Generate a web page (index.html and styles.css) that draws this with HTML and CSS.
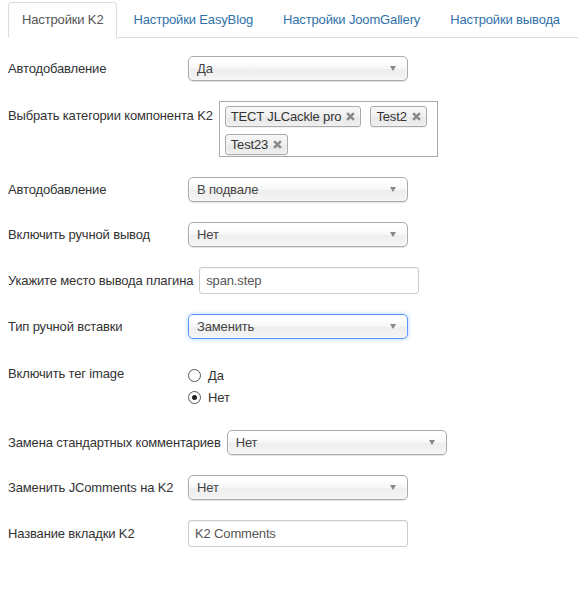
FILE: index.html
```html
<!DOCTYPE html>
<html lang="ru">
<head>
<meta charset="utf-8">
<title>Настройки</title>
<link rel="stylesheet" href="styles.css">
</head>
<body>
<div class="page">
  <ul class="tabs">
    <li class="tab active">Настройки K2</li>
    <li class="tab">Настройки EasyBlog</li>
    <li class="tab">Настройки JoomGallery</li>
    <li class="tab">Настройки вывода</li>
  </ul>

  <div class="form">
    <div class="row">
      <div class="label">Автодобавление</div>
      <div class="select"><span>Да</span><i class="arrow"></i></div>
    </div>

    <div class="row top">
      <div class="label">Выбрать категории компонента K2</div>
      <div class="multi">
        <span class="tag">TECT JLCackle pro<svg class="x" viewBox="0 0 8 8"><path d="M1 1L7 7M7 1L1 7"/></svg></span>
        <span class="tag">Test2<svg class="x" viewBox="0 0 8 8"><path d="M1 1L7 7M7 1L1 7"/></svg></span>
        <span class="tag">Test23<svg class="x" viewBox="0 0 8 8"><path d="M1 1L7 7M7 1L1 7"/></svg></span>
      </div>
    </div>

    <div class="row">
      <div class="label">Автодобавление</div>
      <div class="select"><span>В подвале</span><i class="arrow"></i></div>
    </div>

    <div class="row">
      <div class="label">Включить ручной вывод</div>
      <div class="select"><span>Нет</span><i class="arrow"></i></div>
    </div>

    <div class="row">
      <div class="label">Укажите место вывода плагина</div>
      <div class="input">span.step</div>
    </div>

    <div class="row">
      <div class="label">Тип ручной вставки</div>
      <div class="select focus"><span>Заменить</span><i class="arrow"></i></div>
    </div>

    <div class="row top">
      <div class="label">Включить тег image</div>
      <div class="radios">
        <div class="radio"><span class="dot"></span>Да</div>
        <div class="radio"><span class="dot checked"></span>Нет</div>
      </div>
    </div>

    <div class="row">
      <div class="label">Замена стандартных комментариев</div>
      <div class="select"><span>Нет</span><i class="arrow"></i></div>
    </div>

    <div class="row">
      <div class="label">Заменить JComments на K2</div>
      <div class="select"><span>Нет</span><i class="arrow"></i></div>
    </div>

    <div class="row">
      <div class="label">Название вкладки K2</div>
      <div class="input">K2 Comments</div>
    </div>
  </div>
</div>
</body>
</html>
```

FILE: styles.css
```css
html, body {
  margin: 0;
  padding: 0;
  background: #fff;
}
body {
  font-family: "Liberation Sans", Arial, sans-serif;
  font-size: 13px;
  letter-spacing: -0.15px;
  color: #333;
}
.page {
  padding: 2px 0 0 8px;
}
.tabs {
  list-style: none;
  margin: 0;
  padding: 0;
  display: flex;
  border-bottom: 1px solid #ddd;
}
.tab {
  padding: 7px 13px;
  line-height: 20px;
  border: 1px solid transparent;
  border-radius: 4px 4px 0 0;
  margin-right: 2px;
  margin-bottom: -1px;
  color: #3071a9;
  white-space: nowrap;
}
.tab.active {
  color: #555;
  background: #fff;
  border-color: #ddd;
  border-bottom-color: #fff;
}
.form {
  padding-top: 18px;
}
.row {
  display: flex;
  align-items: center;
  margin-bottom: 20px;
}
.row.top {
  align-items: flex-start;
}
.label {
  flex: 0 0 auto;
  min-width: 174px;
  margin-right: 6px;
  line-height: 18px;
  white-space: nowrap;
}
.row.top .label {
  padding-top: 6px;
}
.select {
  box-sizing: border-box;
  width: 220px;
  height: 25px;
  border: 1px solid #aaa;
  border-radius: 5px;
  background: linear-gradient(#ffffff 20%, #f6f6f6 50%, #eeeeee 52%, #f4f4f4 100%);
  box-shadow: 0 0 3px #fff inset, 0 1px 1px rgba(0,0,0,0.12);
  display: flex;
  align-items: center;
  justify-content: space-between;
  padding: 0 11px 0 8px;
  color: #444;
  line-height: 23px;
}
.select.focus {
  border-color: #5897fb;
  box-shadow: 0 0 4px rgba(88,151,251,0.5);
}
.arrow {
  width: 0;
  height: 0;
  border-left: 3px solid transparent;
  border-right: 3px solid transparent;
  border-top: 5px solid #888;
}
.input {
  box-sizing: border-box;
  width: 220px;
  height: 27px;
  border: 1px solid #ccc;
  border-radius: 3px;
  box-shadow: inset 0 1px 1px rgba(0,0,0,0.05);
  padding: 0 6px;
  line-height: 25px;
  color: #555;
}
.multi {
  box-sizing: border-box;
  width: 219px;
  height: 56px;
  border: 1px solid #aaa;
  background: #fff;
  display: flex;
  flex-wrap: wrap;
  align-content: flex-start;
  column-gap: 9px;
  row-gap: 7px;
  padding: 4px 0 0 5px;
}
.tag {
  box-sizing: border-box;
  height: 21px;
  display: flex;
  align-items: center;
  gap: 5px;
  padding: 0 5px;
  border: 1px solid #aaa;
  border-radius: 3px;
  background: linear-gradient(#f4f4f4 20%, #f0f0f0 50%, #e8e8e8 52%, #eeeeee 100%);
  box-shadow: 0 0 2px #fff inset, 0 1px 0 rgba(0,0,0,0.05);
  color: #333;
  line-height: 19px;
  white-space: nowrap;
}
.x {
  width: 9px;
  height: 9px;
  flex: 0 0 auto;
}
.x path {
  stroke: #888;
  stroke-width: 2.2;
  fill: none;
}
.radios {
  padding: 5px 0 2px;
}
.radio {
  display: flex;
  align-items: center;
  height: 22px;
  gap: 7px;
}
.dot {
  box-sizing: border-box;
  width: 13px;
  height: 13px;
  border: 1px solid #555;
  border-radius: 50%;
  background: #fff;
  display: flex;
  align-items: center;
  justify-content: center;
}
.dot.checked::after {
  content: "";
  width: 5px;
  height: 5px;
  border-radius: 50%;
  background: #222;
}
```
